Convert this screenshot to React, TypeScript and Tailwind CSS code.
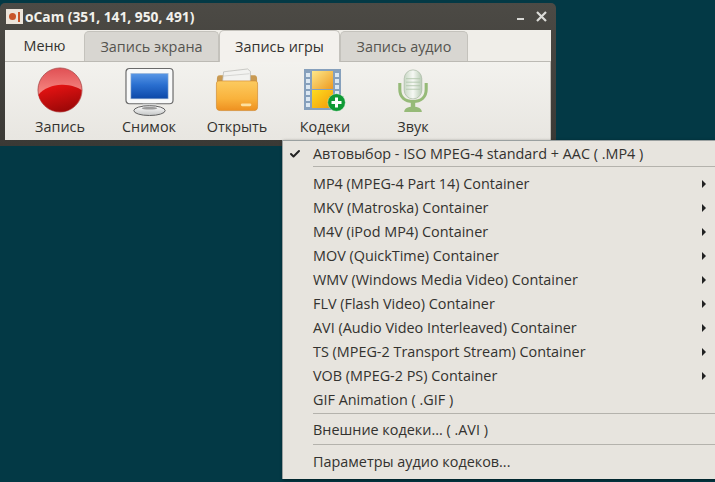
import React from 'react';
import { Check } from 'lucide-react';

const menuFont = "font-['Open_Sans','Noto_Sans',sans-serif]";

const RecordIcon = () => (
  <svg width="46" height="46" viewBox="0 0 48 48">
    <defs>
      <linearGradient id="recTop" x1="0" y1="0" x2="0" y2="1">
        <stop offset="0" stopColor="#e05054" />
        <stop offset="0.55" stopColor="#f58580" />
      </linearGradient>
      <linearGradient id="recLow" x1="0" y1="0" x2="0.4" y2="1">
        <stop offset="0" stopColor="#f01414" />
        <stop offset="1" stopColor="#a00808" />
      </linearGradient>
    </defs>
    <circle cx="24" cy="24" r="23" fill="url(#recTop)" stroke="#a84444" strokeWidth="0.8" />
    <path d="M1.500 29C7 22 18 18 27 18.500C36 19 42 21 46.500 24C46.500 37 36 46.800 24 46.800C13 46.800 4 39 1.500 29Z" fill="url(#recLow)" />
  </svg>
);

const MonitorIcon = () => (
  <svg width="49" height="50" viewBox="0 0 50 50">
    <defs>
      <linearGradient id="scr" x1="0" y1="0" x2="0" y2="1">
        <stop offset="0" stopColor="#5a98e6" />
        <stop offset="0.45" stopColor="#2a6fd0" />
        <stop offset="1" stopColor="#0c48a8" />
      </linearGradient>
      <linearGradient id="base" x1="0" y1="0" x2="0" y2="1">
        <stop offset="0" stopColor="#ffffff" />
        <stop offset="1" stopColor="#c4c6c6" />
      </linearGradient>
    </defs>
    <rect x="1" y="1" width="48" height="36" rx="3.500" fill="#f8f9f9" stroke="#6a6a6a" strokeWidth="1.200" />
    <rect x="6" y="6" width="38" height="26" fill="url(#scr)" stroke="#a9bdd4" strokeWidth="0.6" />
    <path d="M18 37H32V41H18Z" fill="#d6d7d7" />
    <ellipse cx="25" cy="44" rx="16" ry="5" fill="url(#base)" stroke="#5e5e5e" strokeWidth="1" />
    <ellipse cx="25" cy="41.500" rx="8" ry="1.400" fill="#9a9a9a" />
  </svg>
);

const FolderIcon = () => (
  <svg width="44" height="44" viewBox="0 0 46 46">
    <defs>
      <linearGradient id="fold" x1="0" y1="0" x2="0" y2="1">
        <stop offset="0" stopColor="#fccb60" />
        <stop offset="0.6" stopColor="#f9b23c" />
        <stop offset="1" stopColor="#ee9020" />
      </linearGradient>
    </defs>
    <path d="M2 12C2 8 3 7.500 6 7.500H40C43 7.500 44 8 44 12V18H2Z" fill="#c99a52" />
    <path d="M8 13L9 4L34 1L37 3.500V15H8Z" fill="#f2f2f0" stroke="#b4b4b0" strokeWidth="0.7" />
    <path d="M8 8.500L36 6" stroke="#c8c8c4" strokeWidth="0.7" />
    <path d="M1.500 17C1.500 14 2.500 13.500 5 13.500H41C43.500 13.500 44.500 14 44.500 17V40C44.500 43.500 43.500 44.500 40 44.500H6C2.500 44.500 1.500 43.500 1.500 40Z" fill="url(#fold)" stroke="#d08a30" strokeWidth="0.7" />
    <rect x="27" y="37" width="11" height="3" rx="1.500" fill="#fde0a0" />
  </svg>
);

const CodecIcon = () => {
  const holes = [4, 10, 16, 22, 28, 34];
  return (
    <svg width="42" height="44" viewBox="0 0 42 44">
      <defs>
        <linearGradient id="fr1" x1="0" y1="0" x2="1" y2="1">
          <stop offset="0" stopColor="#fde88a" />
          <stop offset="1" stopColor="#ee9a20" />
        </linearGradient>
        <linearGradient id="fr2" x1="0" y1="0" x2="1" y2="1">
          <stop offset="0" stopColor="#fbdc20" />
          <stop offset="1" stopColor="#f59a08" />
        </linearGradient>
      </defs>
      <rect x="0" y="0" width="37" height="41" fill="#86a0bc" />
      {holes.map((y) => (
        <React.Fragment key={y}>
          <rect x="2" y={y} width="4" height="4" fill="#dce8f2" />
          <rect x="31" y={y} width="4" height="4" fill="#dce8f2" />
        </React.Fragment>
      ))}
      <rect x="8" y="2" width="21" height="18" fill="url(#fr1)" />
      <rect x="8" y="21" width="21" height="18" fill="url(#fr2)" />
      <circle cx="32.500" cy="33.500" r="8.800" fill="#0f9a35" stroke="#e8f5e8" strokeWidth="0.4" />
      <path d="M32.500 28.500V38.500M27.500 33.500H37.500" stroke="#ffffff" strokeWidth="3" />
    </svg>
  );
};

const MicIcon = () => (
  <svg width="32" height="44" viewBox="0 0 36 50">
    <defs>
      <linearGradient id="mic" x1="0" y1="0" x2="1" y2="0">
        <stop offset="0" stopColor="#c8d8c4" />
        <stop offset="0.5" stopColor="#f6f8f4" />
        <stop offset="1" stopColor="#b8ccb4" />
      </linearGradient>
    </defs>
    <path d="M3 16V23C3 32 9 37 18 37C27 37 33 32 33 23V16" fill="none" stroke="#96ba78" strokeWidth="3.500" />
    <path d="M18 37V44" stroke="#96ba78" strokeWidth="5" />
    <path d="M8 49C8 45 12 43 18 43C24 43 28 45 28 49Z" fill="#96ba78" />
    <rect x="8" y="1" width="20" height="33" rx="10" fill="url(#mic)" stroke="#a8b8a4" strokeWidth="0.8" />
    <path d="M10 11H26M10 15H26M10 19H26M10 23H26" stroke="#b2c6ac" strokeWidth="1" />
  </svg>
);

const tools = [
  { label: 'Запись', icon: <RecordIcon />, w: 'w-[78px]', mb: 'mb-[4px]' },
  { label: 'Снимок', icon: <MonitorIcon />, w: 'w-[100px]', mb: 'mb-0' },
  { label: 'Открыть', icon: <FolderIcon />, w: 'w-[76px]', mb: 'mb-[5px]' },
  { label: 'Кодеки', icon: <CodecIcon />, w: 'w-[100px]', mb: 'mb-[4px]' },
  { label: 'Звук', icon: <MicIcon />, w: 'w-[76px]', mb: 'mb-[4px]' },
];

const containers = [
  'MP4 (MPEG-4 Part 14) Container',
  'MKV (Matroska) Container',
  'M4V (iPod MP4) Container',
  'MOV (QuickTime) Container',
  'WMV (Windows Media Video) Container',
  'FLV (Flash Video) Container',
  'AVI (Audio Video Interleaved) Container',
  'TS (MPEG-2 Transport Stream) Container',
  'VOB (MPEG-2 PS) Container',
];

const MenuRow = ({ text, arrow, checked }: { text: string; arrow?: boolean; checked?: boolean }) => (
  <div className="flex h-6 items-center text-[14.4px] text-[#33322f]">
    <div className="flex w-[24px] justify-center">{checked && <Check size={12} strokeWidth={4} className="text-[#222]" />}</div>
    <span className="ml-[6px] flex-1 whitespace-nowrap">{text}</span>
    {arrow && <div className="mr-[9px] h-0 w-0 border-y-[4px] border-l-[4px] border-y-transparent border-l-[#222]" />}
  </div>
);

const Sep = () => <div className="my-[1px] ml-[30px] h-px bg-[#b4b2ac]" />;

export default function App() {
  return (
    <div className="relative h-[482px] w-[715px] overflow-hidden bg-[#033945]">
      {/* oCam window */}
      <div className="mt-[3px] h-[143px] w-[556px] rounded-t-[5px] bg-gradient-to-b from-[#4c4a45] to-[#3a3935] px-[5px] pb-[6px]">
        <div className="flex h-[27px] items-center">
          <div className="ml-[1px] flex h-[15px] w-[17px] items-center justify-center gap-[2px] bg-[#ece4da]">
            <div className="h-[7px] w-[7px] rounded-full bg-[#c8552a]" />
            <div className="h-[10px] w-[2px] bg-[#c8552a]" />
          </div>
          <span className="ml-[2px] font-['Open_Sans',sans-serif] text-[13.8px] leading-none font-bold text-[#f2f1ec]">oCam (351, 141, 950, 491)</span>
          <div className="ml-auto flex items-center gap-[12px] pr-[4px]">
            <div className="mt-[5px] h-[2px] w-[7px] bg-[#d8d8d4]" />
            <svg width="11" height="11" viewBox="0 0 11 11"><path d="M1 1L10 10M10 1L1 10" stroke="#dcdcd8" strokeWidth="2.200" /></svg>
          </div>
        </div>
        <div className={`flex h-[110px] flex-col bg-[#f0eee9] ${menuFont} text-[14.4px] text-[#33322f]`}>
          <div className="flex h-[32px] items-end border-b border-[#bcbab4]">
            <div className="flex h-[31px] w-[79px] items-center justify-center">Меню</div>
            <div className="flex h-[30px] w-[135px] items-center justify-center rounded-t-[5px] border border-b-0 border-[#c4c2bc] bg-[#d8d6d1] text-[#55544f]">Запись экрана</div>
            <div className="relative top-px flex h-[32px] w-[121px] items-center justify-center rounded-t-[5px] border border-b-0 border-[#c4c2bc] bg-[#f3f1ed]">Запись игры</div>
            <div className="flex h-[30px] w-[128px] items-center justify-center rounded-t-[5px] border border-b-0 border-[#c4c2bc] bg-[#d8d6d1] text-[#55544f]">Запись аудио</div>
          </div>
          <div className="flex flex-1 border-r border-[#bcbab4] bg-gradient-to-b from-[#f3f2ee] to-[#e8e6e1] pl-[16px]">
            {tools.map((t) => (
              <div key={t.label} className={`flex ${t.w} flex-col items-center`}>
                <div className="flex h-[55px] items-end">
                  <div className={`flex ${t.mb}`}>{t.icon}</div>
                </div>
                <span className="whitespace-nowrap leading-[20px]">{t.label}</span>
              </div>
            ))}
          </div>
        </div>
      </div>

      {/* codec dropdown */}
      <div className={`absolute top-[140px] left-[282px] w-[433px] border-t border-l border-[#9aa0a0] bg-[#e7e4de] pb-[5px] shadow-[1px_1px_3px_rgba(0,0,0,0.5)] ${menuFont}`}>
        <div className="pt-px">
          <MenuRow text="Автовыбор - ISO MPEG-4 standard + AAC ( .MP4 )" checked />
        </div>
        <div className="ml-[30px] h-px bg-[#b4b2ac]" />
        <div className="pt-[5px]">
          {containers.map((c) => (
            <MenuRow key={c} text={c} arrow />
          ))}
          <MenuRow text="GIF Animation ( .GIF )" />
        </div>
        <Sep />
        <div className="pt-[3px] pb-px">
          <MenuRow text="Внешние кодеки... ( .AVI )" />
        </div>
        <Sep />
        <div className="pt-[4px]">
          <MenuRow text="Параметры аудио кодеков..." />
        </div>
      </div>
    </div>
  );
}
